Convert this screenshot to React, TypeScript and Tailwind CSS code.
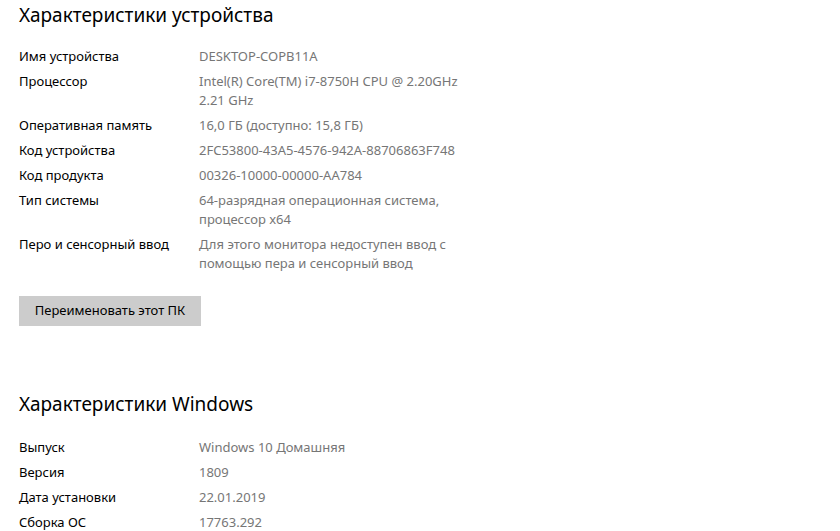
const device: [string, string][] = [
  ["Имя устройства", "DESKTOP-COPB11A"],
  ["Процессор", "Intel(R) Core(TM) i7-8750H CPU @ 2.20GHz 2.21 GHz"],
  ["Оперативная память", "16,0 ГБ (доступно: 15,8 ГБ)"],
  ["Код устройства", "2FC53800-43A5-4576-942A-88706863F748"],
  ["Код продукта", "00326-10000-00000-AA784"],
  ["Тип системы", "64-разрядная операционная система, процессор x64"],
  ["Перо и сенсорный ввод", "Для этого монитора недоступен ввод с помощью пера и сенсорный ввод"],
];

const windows: [string, string][] = [
  ["Выпуск", "Windows 10 Домашняя"],
  ["Версия", "1809"],
  ["Дата установки", "22.01.2019"],
  ["Сборка ОС", "17763.292"],
];

function Rows({ items }: { items: [string, string][] }) {
  return (
    <div className="flex flex-col gap-[6px]">
      {items.map(([k, v]) => (
        <div key={k} className="flex text-[13px] leading-[19px]">
          <div className="w-[180px] shrink-0 text-black">{k}</div>
          <div className="w-[275px] text-[#767676]">
            {k === "Процессор" ? (
              <>
                Intel(R) Core(TM) i7-8750H CPU @ 2.20GHz
                <br />
                2.21 GHz
              </>
            ) : (
              v
            )}
          </div>
        </div>
      ))}
    </div>
  );
}

export default function App() {
  return (
    <div
      className="w-[840px] h-[531px] overflow-hidden bg-white px-[19px]"
      style={{ fontFamily: '"Noto Sans", "Open Sans", sans-serif' }}
    >
      <h1 className="text-[19px] leading-[28px] pt-[1px] text-black">Характеристики устройства</h1>
      <div className="mt-[18px]">
        <Rows items={device} />
      </div>
      <button className="mt-[23px] h-[30px] w-[182px] bg-[#cccccc] text-[13px] text-black">
        Переименовать этот ПК
      </button>
      <h2 className="mt-[64px] text-[19px] leading-[28px] text-black">Характеристики Windows</h2>
      <div className="mt-[20px]">
        <Rows items={windows} />
      </div>
    </div>
  );
}
